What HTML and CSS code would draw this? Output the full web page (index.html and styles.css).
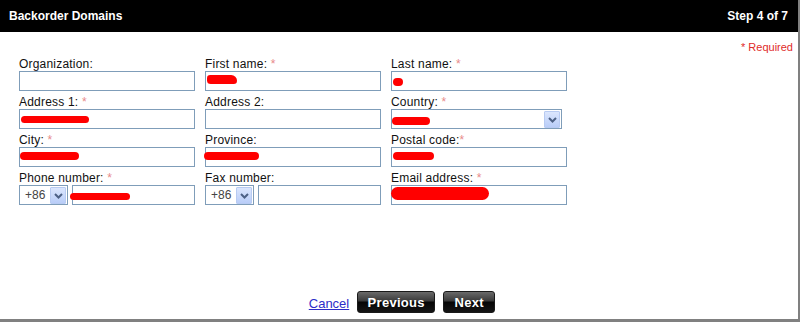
FILE: index.html
```html
<!DOCTYPE html>
<html lang="en">
<head>
  <meta charset="UTF-8">
  <title>Backorder Domains</title>
  <link rel="stylesheet" href="styles.css">
</head>
<body>

  <div class="panel">
    <div class="header">
      <span>Backorder Domains</span>
      <span>Step 4 of 7</span>
    </div>

    <div class="required"><span class="star">*</span> Required</div>

    <div class="form">
      <div class="cell">
        <div class="label">Organization:</div>
        <div class="field"></div>
      </div>
      <div class="cell">
        <div class="label">First name: <span class="star">*</span></div>
        <div class="field"><span class="scribble s-first"></span></div>
      </div>
      <div class="cell">
        <div class="label">Last name: <span class="star">*</span></div>
        <div class="field"><span class="scribble s-last"></span></div>
      </div>

      <div class="cell">
        <div class="label">Address 1: <span class="star">*</span></div>
        <div class="field"><span class="scribble s-addr"></span></div>
      </div>
      <div class="cell">
        <div class="label">Address 2:</div>
        <div class="field"></div>
      </div>
      <div class="cell">
        <div class="label">Country: <span class="star">*</span></div>
        <div class="select wide">
          <span class="scribble s-country"></span>
          <span class="arrow"><svg width="9" height="6" viewBox="0 0 9 6"><path d="M1 1 L4.5 4.5 L8 1" fill="none" stroke="#4d6185" stroke-width="2"/></svg></span>
        </div>
      </div>

      <div class="cell">
        <div class="label">City: <span class="star">*</span></div>
        <div class="field"><span class="scribble s-city"></span></div>
      </div>
      <div class="cell">
        <div class="label">Province:</div>
        <div class="field"><span class="scribble s-prov"></span></div>
      </div>
      <div class="cell">
        <div class="label">Postal code:<span class="star">*</span></div>
        <div class="field"><span class="scribble s-postal"></span></div>
      </div>

      <div class="cell">
        <div class="label">Phone number: <span class="star">*</span></div>
        <div class="phone">
          <div class="select">+86
            <span class="arrow"><svg width="9" height="6" viewBox="0 0 9 6"><path d="M1 1 L4.5 4.5 L8 1" fill="none" stroke="#4d6185" stroke-width="2"/></svg></span>
          </div>
          <div class="field grow"><span class="scribble s-phone"></span></div>
        </div>
      </div>
      <div class="cell">
        <div class="label">Fax number:</div>
        <div class="phone">
          <div class="select">+86
            <span class="arrow"><svg width="9" height="6" viewBox="0 0 9 6"><path d="M1 1 L4.5 4.5 L8 1" fill="none" stroke="#4d6185" stroke-width="2"/></svg></span>
          </div>
          <div class="field grow"></div>
        </div>
      </div>
      <div class="cell">
        <div class="label">Email address: <span class="star">*</span></div>
        <div class="field"><span class="scribble s-email"></span></div>
      </div>
    </div>

    <div class="footer">
      <a href="#" class="cancel">Cancel</a>
      <button class="btn prev">Previous</button>
      <button class="btn next">Next</button>
    </div>
  </div>

</body>
</html>
```

FILE: styles.css
```css
body {
  margin: 0;
  font-family: "Liberation Sans", Arial, sans-serif;
  background-color: #fff;
}

.panel {
  width: 798px;
  height: 319px;
  border-right: 2px solid #808080;
  border-bottom: 3px solid #808080;
  display: flex;
  flex-direction: column;
}

.header {
  height: 32px;
  background-color: #000;
  color: #fff;
  font-weight: bold;
  font-size: 12px;
  line-height: 14px;
  padding: 0 10px 0 9px;
  display: flex;
  align-items: center;
  justify-content: space-between;
}

.required {
  margin-top: 9px;
  padding-right: 5px;
  text-align: right;
  font-size: 11px;
  line-height: 12px;
  color: #e02a2a;
}

.star {
  color: #e88a8a;
}

.required .star {
  color: #e02a2a;
}

.form {
  display: grid;
  grid-template-columns: 176px 176px 176px;
  column-gap: 10px;
  padding-left: 19px;
}

.label {
  height: 14px;
  padding-top: 4px;
  font-size: 12px;
  line-height: 14px;
  letter-spacing: 0.2px;
  color: #111;
  white-space: nowrap;
}

.field {
  position: relative;
  height: 18px;
  border: 1px solid #7f9db9;
  background-color: #fff;
}

.phone {
  display: flex;
  gap: 4px;
}

.grow {
  flex: 1;
}

.select {
  position: relative;
  width: 47px;
  height: 18px;
  border: 1px solid #7f9db9;
  background-color: #fff;
  font-size: 12px;
  line-height: 18px;
  color: #444;
  text-indent: 5px;
}

.select.wide {
  width: 169px;
}

.arrow {
  position: absolute;
  right: 1px;
  top: 1px;
  width: 14px;
  height: 15px;
  border: 1px solid #b8cbf2;
  border-radius: 1px;
  background: linear-gradient(#dbe6fd, #b9cdf8);
  display: flex;
  align-items: center;
  justify-content: center;
  text-indent: 0;
}

.scribble {
  position: absolute;
  background-color: #f00;
  border-radius: 6px;
}

.s-first { left: 1px; top: 3px; width: 30px; height: 9px; border-radius: 5px 9px 5px 6px; }
.s-last { left: 1px; top: 6px; width: 10px; height: 8px; }
.s-addr { left: 1px; top: 6px; width: 68px; height: 7px; }
.s-country { left: 0; top: 7px; width: 38px; height: 8px; }
.s-city { left: 0; top: 4px; width: 59px; height: 8px; }
.s-prov { left: -2px; top: 4px; width: 55px; height: 8px; }
.s-postal { left: 1px; top: 4px; width: 41px; height: 8px; }
.s-phone { left: -3px; top: 7px; width: 60px; height: 7px; }
.s-email { left: -1px; top: 1px; width: 98px; height: 13px; border-radius: 7px; }

.footer {
  margin-top: auto;
  padding: 0 0 6px 6px;
  display: flex;
  justify-content: center;
  align-items: center;
  gap: 8px;
}

.cancel {
  font-size: 13px;
  color: #2d2dc8;
  text-decoration: underline;
  margin-top: 2px;
}

.btn {
  height: 22px;
  padding: 0;
  border: 1px solid #1a1a1a;
  border-radius: 3px;
  background: linear-gradient(#6a6a6a 0%, #3a3a3a 45%, #050505 50%, #151515 100%);
  color: #fff;
  font-family: "Liberation Sans", Arial, sans-serif;
  font-weight: bold;
  font-size: 13px;
  letter-spacing: 0.3px;
}

.prev {
  width: 78px;
}

.next {
  width: 52px;
}
```
